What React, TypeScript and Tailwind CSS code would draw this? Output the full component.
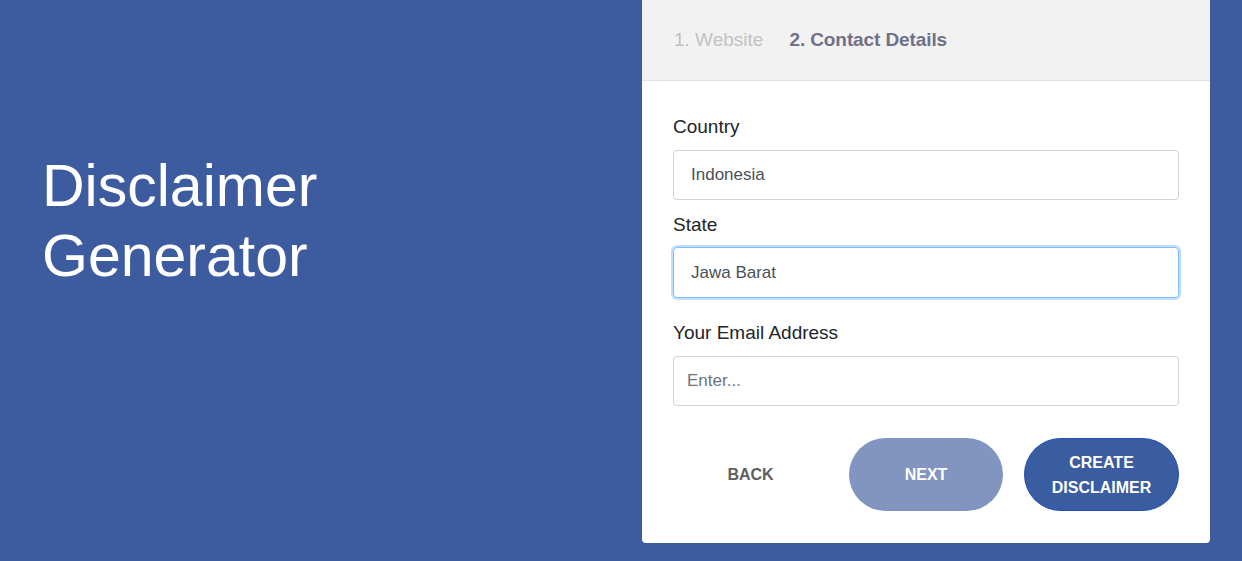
import React from "react";

export default function App() {
  return (
    <div className="flex h-[561px] w-[1242px] bg-[#3d5c9f]" style={{ fontFamily: '"Liberation Sans", Arial, sans-serif' }}>
      <div className="w-[642px] pl-[42px] pt-[151px]">
        <h1 className="text-[59px] leading-[70px] text-white font-normal">
          Disclaimer
          <br />
          Generator
        </h1>
      </div>
      <div className="w-[568px] h-[543px] bg-white rounded-b-[4px] overflow-hidden flex flex-col">
        <div className="h-[81px] bg-[#f2f2f2] border-b border-[#e3e3e3] flex items-center px-8 gap-[26px] text-[19px]">
          <span className="text-[#c2c2c2]">1. Website</span>
          <span className="text-[#6f7089] font-bold tracking-[-0.1px]">2. Contact Details</span>
        </div>
        <div className="flex flex-col pl-[31px] pr-[31px] pt-[32px]">
          <label className="text-[19px] leading-[27px] text-[#212529]">Country</label>
          <div className="mt-[10px] h-[50px] border border-[#ced4da] rounded-[4px] flex items-center px-[17px] text-[17px] text-[#495057]">
            Indonesia
          </div>
          <label className="mt-[11px] text-[19px] leading-[27px] text-[#212529]">State</label>
          <div className="mt-[9px] h-[51px] border border-[#80bdff] rounded-[4px] flex items-center px-[17px] text-[17px] text-[#495057] shadow-[0_0_0_2px_rgba(0,123,255,0.25)]">
            Jawa Barat
          </div>
          <label className="mt-[21px] text-[19px] leading-[27px] text-[#212529]">Your Email Address</label>
          <div className="mt-[10px] h-[50px] border border-[#ced4da] rounded-[4px] flex items-center px-[13px] text-[17px] text-[#6c757d]">
            Enter...
          </div>
          <div className="mt-[32px] flex items-center justify-between">
            <button className="w-[155px] h-[73px] text-[16px] font-bold text-[#5f5f5f] uppercase">Back</button>
            <button className="w-[154px] h-[73px] rounded-[37px] bg-[#8195c0] text-[16px] font-bold text-white uppercase">Next</button>
            <button className="w-[155px] h-[73px] rounded-[37px] bg-[#3a5ca0] border border-[#1f4fb0] text-[16px] leading-[25px] font-bold text-white uppercase">
              Create
              <br />
              Disclaimer
            </button>
          </div>
        </div>
      </div>
    </div>
  );
}
